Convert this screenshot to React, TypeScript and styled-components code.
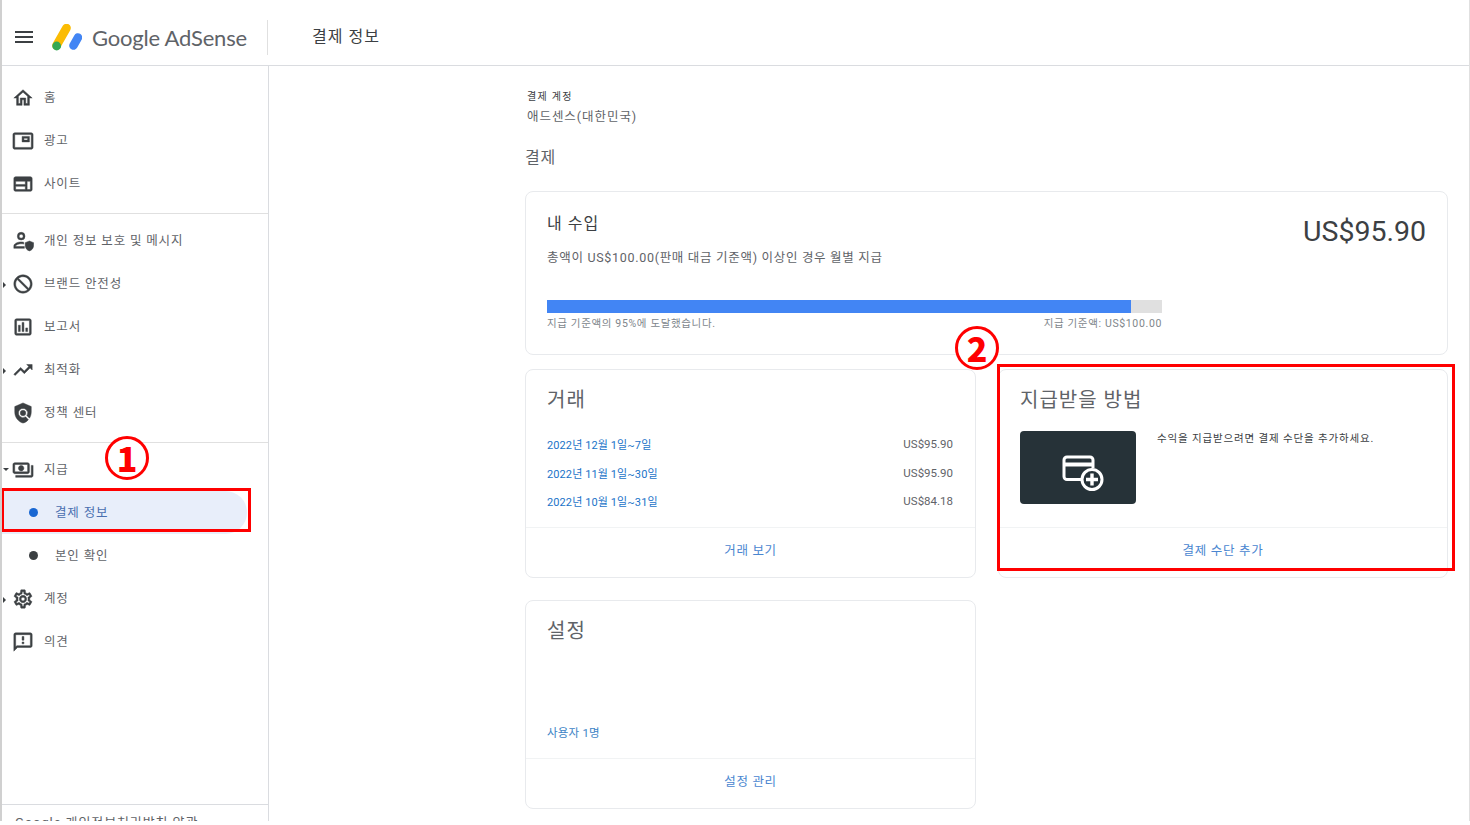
import styled, { createGlobalStyle } from 'styled-components';
import {
  MdBlock,
  MdMenu,
  MdOutlineAssessment,
  MdOutlineFeedback,
  MdOutlineHome,
  MdOutlinePayments,
  MdOutlinePictureInPicture,
  MdOutlineSettings,
  MdOutlineWeb,
  MdPolicy,
  MdTrendingUp,
} from 'react-icons/md';
import type { ReactNode } from 'react';

const GlobalStyle = createGlobalStyle`
  html, body {
    margin: 0;
    padding: 0;
    background: #fff;
    overflow: hidden;
  }
  body {
    font-family: Roboto, "Noto Sans CJK KR", sans-serif;
    color: #3c4043;
  }
`;

const Page = styled.div`
  position: relative;
  width: 1470px;
  height: 821px;
  box-sizing: border-box;
  border-left: 2px solid #d0d0d0;
  border-right: 1px solid #e0e0e0;
  overflow: hidden;
  display: flex;
  flex-direction: column;
  background: #fff;
`;

const Header = styled.header`
  height: 65px;
  flex: none;
  box-sizing: content-box;
  display: flex;
  align-items: center;
  border-bottom: 1px solid #dadce0;
`;

const HeaderInner = styled.div`
  flex: 1;
  padding-top: 8px;
  display: flex;
  align-items: center;
`;

const MenuButton = styled.div`
  width: 44px;
  display: flex;
  justify-content: center;
  font-size: 24px;
  color: #3c4043;
`;

const Brand = styled.div`
  width: 222px;
  height: 35px;
  margin-top: 2px;
  box-sizing: border-box;
  border-right: 1px solid #e0e0e0;
  display: flex;
  align-items: center;
  gap: 10px;
  padding-left: 6px;
`;

const BrandName = styled.span`
  font-family: Lato, Roboto, sans-serif;
  font-size: 22px;
  letter-spacing: -0.2px;
  color: #5f6368;
`;

const PageTitle = styled.h1`
  margin: 0 0 4px 44px;
  font-size: 16px;
  font-weight: 400;
  letter-spacing: 1px;
  color: #3c4043;
`;

const Body = styled.div`
  flex: 1;
  display: flex;
  min-height: 0;
`;

const Sidebar = styled.nav`
  width: 267px;
  flex: none;
  box-sizing: border-box;
  border-right: 1px solid #dadce0;
  display: flex;
  flex-direction: column;
`;

const NavGroup = styled.div<{ $top: number }>`
  padding: ${({ $top }) => $top}px 0 8px;
  border-bottom: 1px solid #e0e0e0;
`;

const NavGroupPlain = styled.div`
  padding-top: 5px;
`;

const Row = styled.div<{ $active?: boolean }>`
  position: relative;
  height: 43px;
  width: 245px;
  box-sizing: border-box;
  display: flex;
  align-items: center;
  padding-left: 10px;
  border-radius: 0 22px 22px 0;
  background: ${({ $active }) => ($active ? '#e8eefa' : 'transparent')};
`;

const IconSlot = styled.span`
  width: 22px;
  height: 22px;
  display: flex;
  align-items: center;
  justify-content: center;
  font-size: 22px;
  color: #3c4043;

  svg {
    stroke: currentColor;
    stroke-width: 0.5;
  }

  svg [fill='none'] {
    stroke: none;
  }
`;

const MirroredBlock = styled(MdBlock)`
  transform: scaleX(-1);
`;

const RowLabel = styled.span`
  margin-left: 10px;
  margin-top: -2px;
  font-size: 12.5px;
  letter-spacing: 0.85px;
  color: #5f6368;
  white-space: nowrap;
`;

const Caret = styled.span<{ $open?: boolean }>`
  position: absolute;
  left: 1px;
  top: 50%;
  width: 0;
  height: 0;
  margin-top: -2px;
  ${({ $open }) =>
    $open
      ? 'border-left: 3px solid transparent; border-right: 3px solid transparent; border-top: 3px solid #3c4043;'
      : 'border-top: 3px solid transparent; border-bottom: 3px solid transparent; border-left: 3px solid #3c4043;'}
`;

const Bullet = styled.span<{ $active?: boolean }>`
  width: 9px;
  height: 9px;
  margin-left: 17px;
  border-radius: 50%;
  background: ${({ $active }) => ($active ? '#1967d2' : '#3c4043')};
`;

const SubLabel = styled.span<{ $active?: boolean }>`
  margin-left: 17px;
  margin-top: -2px;
  font-size: 12.5px;
  letter-spacing: 0.85px;
  color: ${({ $active }) => ($active ? '#4a6fb0' : '#5f6368')};
`;

const SideFooter = styled.div`
  margin-top: auto;
  height: 17px;
  box-sizing: border-box;
  border-top: 1px solid #dadce0;
  padding: 11px 0 0 13px;
  font-size: 13px;
  line-height: 14px;
  letter-spacing: 0.9px;
  color: #5f6368;
  white-space: nowrap;
  overflow: hidden;
`;

const Main = styled.main`
  flex: 1;
  padding: 24px 0 0 256px;
  min-width: 0;
`;

const AccountLabel = styled.div`
  font-size: 10px;
  line-height: 14px;
  letter-spacing: 1.3px;
  color: #3c4043;
  margin-left: 2px;
`;

const AccountName = styled.div`
  margin: 4px 0 0 2px;
  font-size: 12.5px;
  line-height: 18px;
  letter-spacing: 0.95px;
  color: #5f6368;
`;

const SectionTitle = styled.h2`
  margin: 20px 0 21px;
  font-size: 16px;
  line-height: 24px;
  font-weight: 400;
  letter-spacing: 0.7px;
  color: #5f6368;
`;

const CardGrid = styled.div`
  width: 923px;
  display: grid;
  grid-template-columns: 451px 450px;
  column-gap: 22px;
`;

const Card = styled.section`
  box-sizing: border-box;
  border: 1px solid #e8eaed;
  border-radius: 8px;
  background: #fff;
  display: flex;
  flex-direction: column;
`;

const EarningsCard = styled(Card)`
  grid-column: 1 / span 2;
  height: 164px;
  padding: 21px 21px 0;
  margin-bottom: 14px;
`;

const SmallCard = styled(Card)`
  height: 209px;
  margin-bottom: 22px;
`;

const EarningsTop = styled.div`
  display: flex;
  justify-content: space-between;
  align-items: flex-start;
`;

const EarningsTitle = styled.h3`
  margin: 0;
  font-size: 16px;
  line-height: 22px;
  font-weight: 400;
  letter-spacing: 1px;
  color: #3c4043;
`;

const Amount = styled.div`
  font-size: 28.5px;
  line-height: 38px;
  color: #3c4043;
`;

const EarningsText = styled.p`
  margin: -2px 0 0;
  font-size: 12.5px;
  line-height: 18px;
  letter-spacing: 0.7px;
  color: #5f6368;
`;

const Track = styled.div`
  width: 615px;
  height: 13px;
  margin-top: 33px;
  background: #e0e0e0;
`;

const Fill = styled.div`
  height: 100%;
  background: #4285f4;
`;

const TrackLabels = styled.div`
  width: 615px;
  margin-top: 4px;
  display: flex;
  justify-content: space-between;
  font-size: 10.5px;
  line-height: 14px;
  letter-spacing: 0.65px;
  color: #80868b;
`;

const CardBody = styled.div`
  flex: 1;
  padding: 15px 22px 0 21px;
  min-height: 0;
  display: flex;
  flex-direction: column;
`;

const CardTitle = styled.h3`
  margin: 0;
  font-size: 20px;
  line-height: 30px;
  font-weight: 400;
  letter-spacing: 1px;
  color: #5f6368;
`;

const CardFooter = styled.div`
  height: 50px;
  flex: none;
  box-sizing: border-box;
  padding-bottom: 6px;
  display: flex;
  align-items: center;
  justify-content: center;
  border-top: 1px solid #f1f3f4;
  font-size: 12.5px;
  letter-spacing: 0.7px;
  color: #4a86d0;
`;

const Transactions = styled.div`
  margin-top: 15px;
  display: flex;
  flex-direction: column;
`;

const TransactionRow = styled.div`
  height: 28.6px;
  display: flex;
  align-items: center;
  justify-content: space-between;
`;

const TransactionLink = styled.span`
  font-size: 11px;
  letter-spacing: 0.1px;
  color: #1a73c8;
`;

const TransactionAmount = styled.span`
  font-size: 11.5px;
  color: #5f6368;
`;

const PayoutRow = styled.div`
  margin-top: 16px;
  display: flex;
  align-items: flex-start;
  gap: 21px;
`;

const PayoutArt = styled.div`
  width: 116px;
  height: 73px;
  flex: none;
  border-radius: 4px;
  background: #263238;
  display: flex;
  align-items: center;
  justify-content: center;

  svg {
    margin: 10px 0 0 10px;
  }
`;

const PayoutText = styled.p`
  margin: 1px 0 0;
  font-size: 10.5px;
  line-height: 14px;
  letter-spacing: 0.85px;
  color: #3c4043;
`;

const UserCount = styled.span`
  margin-top: auto;
  margin-bottom: 18px;
  font-size: 11.5px;
  letter-spacing: 0.2px;
  color: #3d84c6;
`;

const RedBox = styled.div<{ $x: number; $y: number; $w: number; $h: number }>`
  position: absolute;
  left: ${({ $x }) => $x}px;
  top: ${({ $y }) => $y}px;
  width: ${({ $w }) => $w}px;
  height: ${({ $h }) => $h}px;
  box-sizing: border-box;
  border: 3px solid #ff0000;
  pointer-events: none;
`;

const Marker = styled.div<{ $x: number; $y: number }>`
  position: absolute;
  left: ${({ $x }) => $x}px;
  top: ${({ $y }) => $y}px;
  width: 44px;
  height: 44px;
  box-sizing: border-box;
  border: 3px solid #ff0000;
  border-radius: 50%;
  display: flex;
  align-items: center;
  justify-content: center;
  font-family: "Noto Sans CJK KR", sans-serif;
  font-size: 34px;
  line-height: 1;
  font-weight: 900;
  color: #ff0000;
  background: #fff;
`;

const Logo = () => (
  <svg width="30" height="27" viewBox="0 0 30 27">
    <path d="M4.5 21.5 L14.5 4" stroke="#fbbc04" strokeWidth="8.6" strokeLinecap="round" fill="none" />
    <path d="M21.5 21.5 L26 13.5" stroke="#4285f4" strokeWidth="8.6" strokeLinecap="round" fill="none" />
    <circle cx="4.7" cy="22" r="4.4" fill="#34a853" />
  </svg>
);

const PrivacyIcon = () => (
  <svg width="22" height="22" viewBox="0 0 24 24" fill="#3c4043">
    <path d="M10 4.5a2.2 2.2 0 1 1 0 4.4 2.2 2.2 0 0 1 0-4.4M10 2.5a4.2 4.2 0 1 0 0 8.4 4.2 4.2 0 0 0 0-8.4z" />
    <path d="M10 13c-3.4 0-8 1.6-8 4.4V20h11.5v-2H4v-.6c0-.9 3-2.4 6-2.4.9 0 1.9.1 2.8.4v-2.1c-1-.2-2-.3-2.8-.3z" />
    <path d="M19 12l-4.6 1.8v3c0 2.8 1.9 5.3 4.6 6 2.7-.7 4.6-3.2 4.6-6v-3z" />
  </svg>
);

const AddCardIcon = () => (
  <svg width="42" height="36" viewBox="0 0 42 36" fill="none" stroke="#fff" strokeWidth="3">
    <path d="M22 24.5H5a3 3 0 0 1-3-3V5a3 3 0 0 1 3-3h23a3 3 0 0 1 3 3v8" />
    <path d="M2 9.5h29" strokeWidth="4" />
    <circle cx="30" cy="24.5" r="10" fill="#263238" />
    <path d="M30 18.5v12M24 24.5h12" strokeWidth="3.4" />
  </svg>
);

type NavItem = { icon: ReactNode; label: string; caret?: boolean };

const topItems: NavItem[] = [
  { icon: <MdOutlineHome />, label: '홈' },
  { icon: <MdOutlinePictureInPicture />, label: '광고' },
  { icon: <MdOutlineWeb />, label: '사이트' },
];

const midItems: NavItem[] = [
  { icon: <PrivacyIcon />, label: '개인 정보 보호 및 메시지' },
  { icon: <MirroredBlock />, label: '브랜드 안전성', caret: true },
  { icon: <MdOutlineAssessment />, label: '보고서' },
  { icon: <MdTrendingUp />, label: '최적화', caret: true },
  { icon: <MdPolicy />, label: '정책 센터' },
];

const NavRow = ({ icon, label, caret }: NavItem) => (
  <Row>
    {caret && <Caret />}
    <IconSlot>{icon}</IconSlot>
    <RowLabel>{label}</RowLabel>
  </Row>
);

const transactions = [
  { period: '2022년 12월 1일~7일', amount: 'US$95.90' },
  { period: '2022년 11월 1일~30일', amount: 'US$95.90' },
  { period: '2022년 10월 1일~31일', amount: 'US$84.18' },
];

const progress = 95;

export default function App() {
  return (
    <>
      <GlobalStyle />
      <Page>
        <Header>
          <HeaderInner>
            <MenuButton>
              <MdMenu />
            </MenuButton>
            <Brand>
              <Logo />
              <BrandName>Google AdSense</BrandName>
            </Brand>
            <PageTitle>결제 정보</PageTitle>
          </HeaderInner>
        </Header>
        <Body>
          <Sidebar>
            <NavGroup $top={10}>
              {topItems.map((item) => (
                <NavRow key={item.label} {...item} />
              ))}
            </NavGroup>
            <NavGroup $top={5}>
              {midItems.map((item) => (
                <NavRow key={item.label} {...item} />
              ))}
            </NavGroup>
            <NavGroupPlain>
              <Row>
                <Caret $open />
                <IconSlot>
                  <MdOutlinePayments />
                </IconSlot>
                <RowLabel>지급</RowLabel>
              </Row>
              <Row $active>
                <Bullet $active />
                <SubLabel $active>결제 정보</SubLabel>
              </Row>
              <Row>
                <Bullet />
                <SubLabel>본인 확인</SubLabel>
              </Row>
              <NavRow icon={<MdOutlineSettings />} label="계정" caret />
              <NavRow icon={<MdOutlineFeedback />} label="의견" />
            </NavGroupPlain>
            <SideFooter>Google 개인정보처리방침 약관</SideFooter>
          </Sidebar>
          <Main>
            <AccountLabel>결제 계정</AccountLabel>
            <AccountName>애드센스(대한민국)</AccountName>
            <SectionTitle>결제</SectionTitle>
            <CardGrid>
              <EarningsCard>
                <EarningsTop>
                  <EarningsTitle>내 수입</EarningsTitle>
                  <Amount>US$95.90</Amount>
                </EarningsTop>
                <EarningsText>총액이 US$100.00(판매 대금 기준액) 이상인 경우 월별 지급</EarningsText>
                <Track>
                  <Fill style={{ width: `${progress}%` }} />
                </Track>
                <TrackLabels>
                  <span>지급 기준액의 95%에 도달했습니다.</span>
                  <span>지급 기준액: US$100.00</span>
                </TrackLabels>
              </EarningsCard>
              <SmallCard>
                <CardBody>
                  <CardTitle>거래</CardTitle>
                  <Transactions>
                    {transactions.map((t) => (
                      <TransactionRow key={t.period}>
                        <TransactionLink>{t.period}</TransactionLink>
                        <TransactionAmount>{t.amount}</TransactionAmount>
                      </TransactionRow>
                    ))}
                  </Transactions>
                </CardBody>
                <CardFooter>거래 보기</CardFooter>
              </SmallCard>
              <SmallCard>
                <CardBody>
                  <CardTitle>지급받을 방법</CardTitle>
                  <PayoutRow>
                    <PayoutArt>
                      <AddCardIcon />
                    </PayoutArt>
                    <PayoutText>수익을 지급받으려면 결제 수단을 추가하세요.</PayoutText>
                  </PayoutRow>
                </CardBody>
                <CardFooter>결제 수단 추가</CardFooter>
              </SmallCard>
              <SmallCard>
                <CardBody>
                  <CardTitle>설정</CardTitle>
                  <UserCount>사용자 1명</UserCount>
                </CardBody>
                <CardFooter>설정 관리</CardFooter>
              </SmallCard>
            </CardGrid>
          </Main>
        </Body>
        <RedBox $x={-1} $y={488} $w={250} $h={44} />
        <RedBox $x={995} $y={364} $w={458} $h={207} />
        <Marker $x={103} $y={436}>1</Marker>
        <Marker $x={953} $y={326}>2</Marker>
      </Page>
    </>
  );
}
